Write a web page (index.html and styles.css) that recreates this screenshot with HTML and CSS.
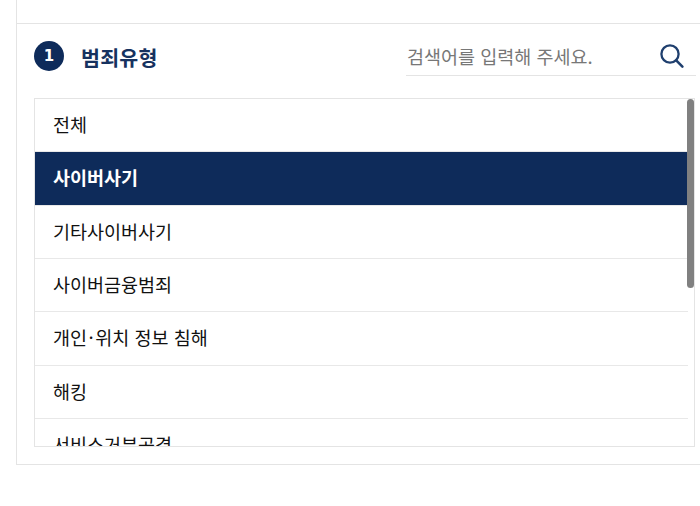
FILE: index.html
```html
<!DOCTYPE html>
<html lang="ko">
<head>
<meta charset="utf-8">
<title>범죄유형</title>
<link rel="stylesheet" href="styles.css">
</head>
<body>
<main class="panel">
  <div class="top-strip"></div>
  <section class="section">
    <header class="head">
      <div class="title-wrap">
        <span class="badge">1</span>
        <h2 class="title">범죄유형</h2>
      </div>
      <div class="search">
        <span class="placeholder">검색어를 입력해 주세요.</span>
        <svg class="search-icon" width="26" height="26" viewBox="0 0 26 26" aria-hidden="true">
          <circle cx="11" cy="10" r="8.6" fill="none" stroke="#1f3f6e" stroke-width="2.3"/>
          <path d="M17.2 16.4 L23.4 22.6" fill="none" stroke="#1f3f6e" stroke-width="2.6" stroke-linecap="round"/>
        </svg>
      </div>
    </header>
    <div class="list-box">
      <ul class="list">
        <li class="row">전체</li>
        <li class="row row-active">사이버사기</li>
        <li class="row">기타사이버사기</li>
        <li class="row">사이버금융범죄</li>
        <li class="row">개인<span class="dot">·</span>위치 정보 침해</li>
        <li class="row">해킹</li>
        <li class="row">서비스거부공격</li>
      </ul>
      <div class="thumb"></div>
    </div>
  </section>
</main>
</body>
</html>
```
FILE: styles.css
```css
* { box-sizing: border-box; }
html, body { margin: 0; padding: 0; height: 506px; overflow: hidden; background: #fff; }
body { font-family: "Noto Sans CJK KR", "Noto Sans", sans-serif; color: #111; }
.panel {
  margin-left: 16px;
  height: 465px;
  border-left: 1px solid #e4e4e4;
  border-bottom: 1px solid #e4e4e4;
}
.top-strip { height: 24px; border-bottom: 1px solid #e4e4e4; }
.section { padding: 0 0 0 17px; }
.head {
  width: 662px;
  height: 74px;
  display: flex;
  justify-content: space-between;
  align-items: flex-start;
}
.title-wrap { display: flex; align-items: center; gap: 17px; padding-top: 17px; }
.badge {
  width: 30px; height: 30px; border-radius: 50%;
  background: #0e2b5a; color: #fff;
  font-family: "DejaVu Sans", sans-serif; font-weight: 700; font-size: 15px;
  display: flex; align-items: center; justify-content: center;
}
.title { margin: 0; font-size: 20.6px; letter-spacing: 0.2px; font-weight: 700; line-height: 30px; color: #16325f; position: relative; top: 1px; }
.search {
  width: 290px; height: 52px;
  padding: 0 11px 0 1px;
  border-bottom: 1px solid #e4e4e4;
  display: flex; justify-content: space-between; align-items: flex-start;
}
.placeholder { font-size: 18.5px; line-height: 38px; margin-top: 13px; color: #777; }
.search-icon { margin-top: 20px; }
.list-box {
  position: relative;
  width: 661px; height: 349px;
  border: 1px solid #e4e4e4;
  overflow: hidden;
}
.list { list-style: none; margin: 0; padding: 0; margin-right: 6px; }
.row {
  height: 53.33px;
  padding-left: 18px;
  font-size: 18.5px;
  line-height: 51px;
  border-bottom: 1px solid #e8e8e8;
}
.row-active { background: #0e2b5a; color: #fff; font-weight: 700; }
.dot { padding: 0 1.5px; }
.thumb {
  position: absolute; top: 0; right: 0;
  width: 7px; height: 189px;
  background: #808080;
  border-radius: 4px;
}
```
